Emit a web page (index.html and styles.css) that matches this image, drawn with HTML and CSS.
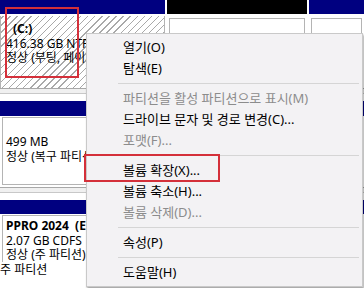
FILE: index.html
```html
<!DOCTYPE html>
<html lang="ko">
<head>
    <meta charset="UTF-8">
    <meta name="viewport" content="width=device-width, initial-scale=1.0">
    <title>디스크 관리</title>
    <link rel="stylesheet" href="styles.css">
</head>
<body>
    <div class="disk-view">
        <!-- 디스크 0 -->
        <div class="disk first">
            <div class="part sel w-c">
                <div class="bar"></div>
                <div class="body tall">
                    <div class="box">
                        <p class="name indent">(C:)</p>
                        <p>416.38 GB NTFS</p>
                        <p>정상 (부팅, 페이지 파일, 크래시 덤프, 주 파티션)</p>
                    </div>
                </div>
            </div>
            <div class="part w-un">
                <div class="bar black"></div>
                <div class="body tall"><div class="box"></div></div>
            </div>
            <div class="part grow">
                <div class="bar"></div>
                <div class="body tall"><div class="box"></div></div>
            </div>
        </div>

        <!-- 디스크 1 -->
        <div class="disk">
            <div class="part w-left">
                <div class="bar"></div>
                <div class="body mid">
                    <div class="box center">
                        <p>499 MB</p>
                        <p>정상 (복구 파티션)</p>
                    </div>
                </div>
            </div>
            <div class="part grow">
                <div class="bar"></div>
                <div class="body mid"><div class="box"></div></div>
            </div>
        </div>

        <!-- CD-ROM -->
        <div class="disk last">
            <div class="part w-left">
                <div class="bar"></div>
                <div class="body short">
                    <div class="box">
                        <p class="name">PPRO 2024&nbsp; (E:)</p>
                        <p>2.07 GB CDFS</p>
                        <p>정상 (주 파티션)</p>
                    </div>
                </div>
            </div>
            <div class="part grow">
                <div class="bar"></div>
                <div class="body short"><div class="box"></div></div>
            </div>
        </div>
    </div>

    <div class="legend">주 파티션</div>

    <!-- 오른쪽 클릭 메뉴 -->
    <ul class="menu">
        <li>열기(O)</li>
        <li>탐색(E)</li>
        <li class="sep"></li>
        <li class="off">파티션을 활성 파티션으로 표시(M)</li>
        <li>드라이브 문자 및 경로 변경(C)...</li>
        <li class="off">포맷(F)...</li>
        <li class="sep"></li>
        <li>볼륨 확장(X)...</li>
        <li>볼륨 축소(H)...</li>
        <li class="off">볼륨 삭제(D)...</li>
        <li class="sep"></li>
        <li>속성(P)</li>
        <li class="sep"></li>
        <li>도움말(H)</li>
    </ul>

    <!-- 강조 표시 -->
    <div class="mark mark-c"></div>
    <div class="mark mark-menu"></div>
</body>
</html>
```

FILE: styles.css
```css
body {
    font-family: "Noto Sans", "Noto Sans CJK KR", sans-serif;
    font-size: 12px;
    margin: 0;
    padding: 0;
    background: #f0f0f0;
    color: #000;
    width: 364px;
    height: 288px;
    overflow: hidden;
    position: relative;
}
p {
    margin: 0;
    line-height: 14.5px;
    white-space: nowrap;
}
.disk {
    display: flex;
    background: #fff;
    border-top: 1px solid #c8c8c8;
    border-bottom: 1px solid #a8a8a8;
    padding-top: 7px;
    margin-bottom: 4px;
}
.disk.first {
    border-top: none;
    padding-top: 0;
}
.disk.last {
    border-bottom: none;
    margin-bottom: 0;
}
.part {
    margin-right: 2px;
    flex-shrink: 0;
}
.w-c { width: 165px; }
.w-un { width: 140px; }
.w-left { width: 130px; }
.grow { flex: 1; margin-right: 0; }
.bar {
    height: 15px;
    background: #000080;
}
.first .bar { height: 14px; }
.last .bar { height: 14px; }
.bar.black { background: #000; }
.body {
    box-sizing: border-box;
    padding: 1px 2px 2px 2px;
    overflow: hidden;
}
.body.tall {
    height: 72px;
    margin-top: 2px;
    padding-top: 2px;
}
.body.mid { height: 71px; }
.body.short { height: 48px; padding-bottom: 0; }
.box {
    box-sizing: border-box;
    height: 100%;
    border: 1px solid #b4b4b4;
    background: #fff;
    padding: 3px 3px;
    overflow: hidden;
}
.box.center {
    display: flex;
    flex-direction: column;
    justify-content: center;
    padding-bottom: 6px;
}
.last .box { border-bottom: none; }
.sel .body {
    background: repeating-linear-gradient(-45deg, #fff 0 4px, #a9a9a9 4px 5px);
    border-left: 1px solid #b4b4b4;
    border-right: 1px solid #b4b4b4;
}
.sel .box {
    background: transparent;
    border-color: transparent;
    padding-left: 2px;
}
.name { font-weight: bold; }
.indent { padding-left: 7px; }
.legend {
    background: #fff;
    height: 25px;
    padding-top: 1px;
    line-height: 14.5px;
    border-bottom: 1px solid #d0d0d0;
}
.menu {
    position: absolute;
    left: 86px;
    top: 33px;
    width: 277px;
    box-sizing: border-box;
    margin: 0;
    padding: 3px 0;
    list-style: none;
    background: #f3f2f4;
    border: 1px solid #c9c9c9;
    box-shadow: 1px 2px 2px rgba(0, 0, 0, 0.35);
    font-size: 13px;
}
.menu li {
    height: 21px;
    line-height: 21px;
    padding-left: 36px;
    white-space: nowrap;
}
.menu li.off { color: #8c8c8c; }
.menu li.sep {
    height: 9px;
    padding: 0;
    margin: 0 3px 0 31px;
    position: relative;
}
.menu li.sep::after {
    content: "";
    position: absolute;
    left: 0;
    right: 0;
    top: 4px;
    border-top: 1px solid #d5d5d5;
}
.mark {
    position: absolute;
    box-sizing: border-box;
    border: 2px solid #d4303a;
}
.mark-c {
    left: 5px;
    top: 7px;
    width: 74px;
    height: 71px;
}
.mark-menu {
    left: 84px;
    top: 154px;
    width: 136px;
    height: 28px;
}
```
